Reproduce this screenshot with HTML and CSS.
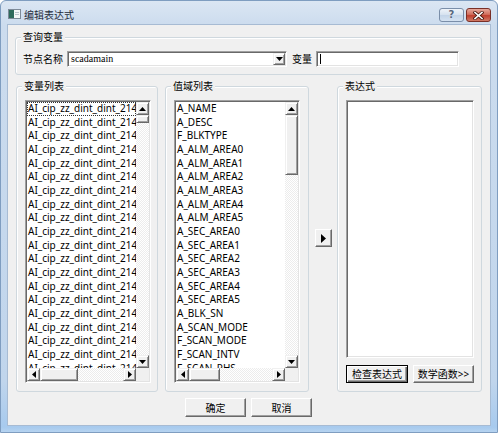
FILE: index.html
```html
<!DOCTYPE html>
<html>
<head>
<meta charset="utf-8">
<link rel="stylesheet" href="styles.css">
</head>
<body>
<div class="window">
  <div class="titlebar">
    <svg class="app-icon" width="13" height="10" viewBox="0 0 13 10">
      <rect x="0.5" y="0.5" width="12" height="9" fill="#f4f6f8" stroke="#7d8a98"/>
      <rect x="1" y="1" width="5" height="8" fill="#2f6a5c"/>
      <rect x="7" y="3" width="4" height="1" fill="#b9c3cc"/>
      <rect x="7" y="5" width="4" height="1" fill="#b9c3cc"/>
    </svg>
    <span class="title">编辑表达式</span>
    <div class="caption">
      <div class="cap-btn help">?</div>
      <div class="cap-btn close">
        <svg width="11" height="9" viewBox="0 0 11 9">
          <path d="M2 1.5 L9 7.5 M9 1.5 L2 7.5" stroke="#4a1a12" stroke-width="3.2" stroke-linecap="square"/>
          <path d="M2 1.5 L9 7.5 M9 1.5 L2 7.5" stroke="#ffffff" stroke-width="1.6" stroke-linecap="square"/>
        </svg>
      </div>
    </div>
  </div>
  <div class="client">
    <fieldset class="group query">
      <legend>查询变量</legend>
      <div class="query-row">
        <span class="label">节点名称</span>
        <div class="combo">
          <span class="combo-text">scadamain</span>
          <div class="combo-btn"><svg width="7" height="4" viewBox="0 0 7 4"><polygon points="0,0 7,0 3.5,4" fill="#000"/></svg></div>
        </div>
        <span class="label var-label">变量</span>
        <div class="edit"><span class="caret"></span></div>
      </div>
    </fieldset>

    <div class="main-row">
      <fieldset class="group vars">
        <legend>变量列表</legend>
        <div class="group-body">
          <div class="listbox">
            <div class="items">
              <div class="item focus">AI_cip_zz_dint_dint_2143</div>
              <div class="item">AI_cip_zz_dint_dint_2143</div>
              <div class="item">AI_cip_zz_dint_dint_2143</div>
              <div class="item">AI_cip_zz_dint_dint_2143</div>
              <div class="item">AI_cip_zz_dint_dint_2143</div>
              <div class="item">AI_cip_zz_dint_dint_2143</div>
              <div class="item">AI_cip_zz_dint_dint_2143</div>
              <div class="item">AI_cip_zz_dint_dint_2143</div>
              <div class="item">AI_cip_zz_dint_dint_2143</div>
              <div class="item">AI_cip_zz_dint_dint_2143</div>
              <div class="item">AI_cip_zz_dint_dint_2143</div>
              <div class="item">AI_cip_zz_dint_dint_2143</div>
              <div class="item">AI_cip_zz_dint_dint_2143</div>
              <div class="item">AI_cip_zz_dint_dint_2143</div>
              <div class="item">AI_cip_zz_dint_dint_2143</div>
              <div class="item">AI_cip_zz_dint_dint_2143</div>
              <div class="item">AI_cip_zz_dint_dint_2143</div>
              <div class="item">AI_cip_zz_dint_dint_2143</div>
              <div class="item">AI_cip_zz_dint_dint_2143</div>
              <div class="item">AI_cip_zz_dint_dint_2143</div>
            </div>
            <div class="vscroll">
              <div class="sb-btn"><svg width="7" height="4" viewBox="0 0 7 4"><polygon points="3.5,0 7,4 0,4" fill="#000"/></svg></div>
              <div class="sb-thumb v-thumb-small"></div>
              <div class="sb-track"></div>
              <div class="sb-btn"><svg width="7" height="4" viewBox="0 0 7 4"><polygon points="0,0 7,0 3.5,4" fill="#000"/></svg></div>
            </div>
            <div class="hscroll">
              <div class="sb-btn"><svg width="4" height="7" viewBox="0 0 4 7"><polygon points="4,0 4,7 0,3.5" fill="#000"/></svg></div>
              <div class="sb-thumb h-thumb-vars"></div>
              <div class="sb-track"></div>
              <div class="sb-btn"><svg width="4" height="7" viewBox="0 0 4 7"><polygon points="0,0 4,3.5 0,7" fill="#000"/></svg></div>
            </div>
            <div class="corner"></div>
          </div>
        </div>
      </fieldset>

      <fieldset class="group values">
        <legend>值域列表</legend>
        <div class="group-body">
          <div class="listbox">
            <div class="items">
              <div class="item">A_NAME</div>
              <div class="item">A_DESC</div>
              <div class="item">F_BLKTYPE</div>
              <div class="item">A_ALM_AREA0</div>
              <div class="item">A_ALM_AREA1</div>
              <div class="item">A_ALM_AREA2</div>
              <div class="item">A_ALM_AREA3</div>
              <div class="item">A_ALM_AREA4</div>
              <div class="item">A_ALM_AREA5</div>
              <div class="item">A_SEC_AREA0</div>
              <div class="item">A_SEC_AREA1</div>
              <div class="item">A_SEC_AREA2</div>
              <div class="item">A_SEC_AREA3</div>
              <div class="item">A_SEC_AREA4</div>
              <div class="item">A_SEC_AREA5</div>
              <div class="item">A_BLK_SN</div>
              <div class="item">A_SCAN_MODE</div>
              <div class="item">F_SCAN_MODE</div>
              <div class="item">F_SCAN_INTV</div>
              <div class="item">F_SCAN_PHS</div>
            </div>
            <div class="vscroll">
              <div class="sb-btn"><svg width="7" height="4" viewBox="0 0 7 4"><polygon points="3.5,0 7,4 0,4" fill="#000"/></svg></div>
              <div class="sb-thumb v-thumb-large"></div>
              <div class="sb-track"></div>
              <div class="sb-btn"><svg width="7" height="4" viewBox="0 0 7 4"><polygon points="0,0 7,0 3.5,4" fill="#000"/></svg></div>
            </div>
            <div class="hscroll">
              <div class="sb-btn"><svg width="4" height="7" viewBox="0 0 4 7"><polygon points="4,0 4,7 0,3.5" fill="#000"/></svg></div>
              <div class="sb-thumb h-thumb-values"></div>
              <div class="sb-track"></div>
              <div class="sb-btn"><svg width="4" height="7" viewBox="0 0 4 7"><polygon points="0,0 4,3.5 0,7" fill="#000"/></svg></div>
            </div>
            <div class="corner"></div>
          </div>
        </div>
      </fieldset>

      <div class="arrow-btn"><svg width="5" height="9" viewBox="0 0 5 9"><polygon points="0,0 5,4.5 0,9" fill="#000"/></svg></div>

      <fieldset class="group expr">
        <legend>表达式</legend>
        <div class="group-body">
          <div class="textarea"></div>
          <div class="expr-buttons">
            <div class="btn default check-btn">检查表达式</div>
            <div class="btn math-btn">数学函数&gt;&gt;</div>
          </div>
        </div>
      </fieldset>
    </div>

    <div class="footer">
      <div class="btn footer-btn">确定</div>
      <div class="btn footer-btn">取消</div>
    </div>
  </div>
</div>
</body>
</html>
```

FILE: styles.css
```css
* { box-sizing: border-box; }
html, body { margin: 0; padding: 0; }
body {
  width: 498px;
  height: 433px;
  overflow: hidden;
  background: #ffffff;
  font-family: "Noto Sans", "Noto Sans CJK SC", sans-serif;
  font-size: 10px;
  color: #000;
}

.window {
  width: 498px;
  height: 433px;
  border: 1px solid #7f9dc0;
  border-radius: 6px 6px 0 0;
  background: linear-gradient(#dbe6f3 0, #ccdcee 24px, #c0d5ec 380px, #a7caee 426px, #bcd7f1 433px);
  padding: 0 6px 6px 6px;
  display: flex;
  flex-direction: column;
}

/* title bar */
.titlebar {
  height: 23px;
  display: flex;
  align-items: flex-start;
  flex: none;
}
.app-icon { margin: 8px 0 0 1px; flex: none; }
.title {
  margin: 8px 0 0 3px;
  line-height: 12px;
  font-family: "Noto Sans CJK SC", sans-serif;
  color: #1e2a3a;
}
.caption {
  margin-left: auto;
  margin-top: 7px;
  display: flex;
  gap: 2px;
}
.cap-btn {
  width: 25px;
  height: 14px;
  border-radius: 3px;
  display: flex;
  align-items: center;
  justify-content: center;
}
.help {
  border: 1px solid #7a8ea9;
  background: linear-gradient(#eef3f9, #d6e2ef 48%, #c3d4e8 52%, #d4e2f1);
  color: #56667c;
  font-family: "DejaVu Sans", sans-serif;
  font-size: 10px;
  font-weight: bold;
  line-height: 12px;
  text-shadow: 0 0 1px #fff;
}
.close {
  border: 1px solid #7a3027;
  background: linear-gradient(#e6a89b, #d26f5e 45%, #c03f2e 55%, #d07a66);
}

/* client area */
.client {
  flex: 1;
  border: 1px solid #a7bbd3;
  background: #f0f0f0;
  padding: 6px 8px 0 7px;
  display: flex;
  flex-direction: column;
}

.group {
  margin: 0;
  padding: 0;
  min-width: 0;
  border: 1px solid #cfd8de;
  border-radius: 3px;
  box-shadow: inset 1px 1px 0 #fff;
}
.group legend {
  margin-left: 5px;
  padding: 0 2px;
  line-height: 12px;
  font-size: 10px;
  background: #f0f0f0;
}

.query { height: 44px; }
.query-row {
  display: flex;
  align-items: center;
  padding: 8px 0 0 7px;
  gap: 4px;
}
.label { line-height: 16px; white-space: nowrap; }
.var-label { margin-left: 1px; }

.combo {
  width: 220px;
  height: 16px;
  background: #fff;
  border: 1px solid;
  border-color: #a0a0a0 #fff #fff #a0a0a0;
  box-shadow: inset 1px 1px 0 #696969, inset -1px -1px 0 #e3e3e3;
  padding: 1px 1px 1px 3px;
  display: flex;
  align-items: center;
}
.combo-text {
  font-family: "Liberation Serif", serif;
  font-size: 10px;
  line-height: 12px;
  flex: 1;
}
.combo-btn {
  width: 12px;
  height: 12px;
  background: #f0f0f0;
  border: 1px solid;
  border-color: #f0f0f0 #696969 #696969 #f0f0f0;
  box-shadow: inset 1px 1px 0 #fff, inset -1px -1px 0 #a0a0a0;
  display: flex;
  align-items: center;
  justify-content: center;
}
.edit {
  width: 143px;
  height: 16px;
  background: #fff;
  border: 1px solid;
  border-color: #a0a0a0 #fff #fff #a0a0a0;
  box-shadow: inset 1px 1px 0 #696969, inset -1px -1px 0 #e3e3e3;
  padding: 2px 0 0 3px;
}
.caret {
  display: block;
  width: 1px;
  height: 10px;
  background: #000;
}

/* main row */
.main-row {
  margin-top: 5px;
  padding-left: 1px;
  height: 312px;
  display: flex;
  align-items: stretch;
}
.vars { width: 142px; }
.values { width: 144px; margin-left: 7px; }
.expr { width: 145px; margin-left: 5px; }
.group-body { padding: 8px 0 0 8px; }

.listbox {
  width: 126px;
  height: 283px;
  background: #fff;
  border: 1px solid;
  border-color: #a0a0a0 #fff #fff #a0a0a0;
  box-shadow: inset 1px 1px 0 #696969, inset -1px -1px 0 #e3e3e3;
  padding: 1px;
  display: grid;
  grid-template-columns: 1fr 13px;
  grid-template-rows: 1fr 13px;
}
.items { overflow: hidden; min-width: 0; }
.item {
  height: 13.68px;
  line-height: 13.68px;
  padding-left: 1px;
  white-space: nowrap;
}
.item.focus { outline: 1px dotted #333; outline-offset: -1px; }

.vscroll { display: flex; flex-direction: column; }
.hscroll { display: flex; }
.sb-btn {
  width: 13px;
  height: 13px;
  flex: none;
  background: #f0f0f0;
  border: 1px solid;
  border-color: #f0f0f0 #696969 #696969 #f0f0f0;
  box-shadow: inset 1px 1px 0 #fff, inset -1px -1px 0 #a0a0a0;
  display: flex;
  align-items: center;
  justify-content: center;
}
.sb-thumb {
  flex: none;
  background: #f0f0f0;
  border: 1px solid;
  border-color: #f0f0f0 #696969 #696969 #f0f0f0;
  box-shadow: inset 1px 1px 0 #fff, inset -1px -1px 0 #a0a0a0;
}
.sb-track {
  flex: 1;
  background: repeating-conic-gradient(#ffffff 0 25%, #ececec 0 50%) 0 0 / 2px 2px;
}
.v-thumb-small { height: 8px; }
.v-thumb-large { height: 60px; }
.h-thumb-vars { width: 38px; }
.h-thumb-values { width: 31px; }
.corner { background: #f0f0f0; }

.arrow-btn {
  width: 17px;
  height: 18px;
  margin-left: 6px;
  align-self: center;
  margin-top: 4px;
  background: #f0f0f0;
  border: 1px solid;
  border-color: #fff #696969 #696969 #fff;
  box-shadow: inset -1px -1px 0 #a0a0a0;
  display: flex;
  align-items: center;
  justify-content: center;
}

.textarea {
  width: 128px;
  height: 258px;
  background: #fff;
  border: 1px solid;
  border-color: #a0a0a0 #fff #fff #a0a0a0;
  box-shadow: inset 1px 1px 0 #696969, inset -1px -1px 0 #e3e3e3;
}
.expr-buttons {
  margin-top: 7px;
  width: 128px;
  display: flex;
  justify-content: space-between;
}

.btn {
  height: 18px;
  background: #f0f0f0;
  border: 1px solid;
  border-color: #fff #696969 #696969 #fff;
  box-shadow: inset -1px -1px 0 #a0a0a0;
  display: flex;
  align-items: center;
  justify-content: center;
  line-height: 12px;
  white-space: nowrap;
}
.btn.default {
  border: 1px solid #000;
  box-shadow: inset 1px 1px 0 #fff, inset -1px -1px 0 #696969, inset -2px -2px 0 #a0a0a0;
}
.check-btn { width: 62px; }
.math-btn { width: 61px; }

.footer {
  margin-top: 6px;
  display: flex;
  justify-content: center;
  gap: 5px;
}
.footer-btn { width: 61px; height: 19px; }
```
